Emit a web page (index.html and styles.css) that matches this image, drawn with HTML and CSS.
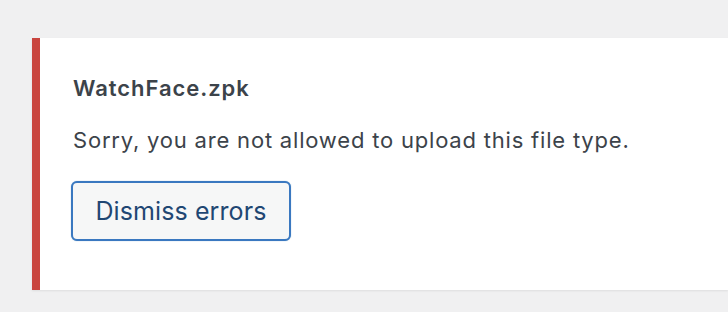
FILE: index.html
```html
<!DOCTYPE html>
<html lang="en">
<head>
<meta charset="utf-8">
<title>Upload error</title>
<link rel="stylesheet" href="styles.css">
</head>
<body>
<div class="notice">
  <p class="notice-title">WatchFace.zpk</p>
  <p class="notice-message">Sorry, you are not allowed to upload this file type.</p>
  <button class="btn" type="button">Dismiss errors</button>
</div>
</body>
</html>
```
FILE: styles.css
```css
html, body {
  margin: 0;
  padding: 0;
}
body {
  background: #f0f0f1;
  font-family: Inter, "Noto Sans", sans-serif;
  color: #3c434a;
  width: 728px;
  height: 312px;
  overflow: hidden;
}
.notice {
  margin: 38px 0 0 32px;
  width: 696px;
  height: 252px;
  box-sizing: border-box;
  background: #fff;
  border-left: 8px solid #c9453f;
  box-shadow: 0 1px 2px rgba(0, 0, 0, 0.08);
  padding: 36px 0 0 33px;
}
.notice-title {
  margin: 0;
  font-size: 22px;
  font-weight: 600;
  line-height: 28px;
  letter-spacing: 0.95px;
}
.notice-message {
  margin: 24px 0 0;
  font-size: 22px;
  font-weight: 400;
  line-height: 28px;
  letter-spacing: 0.8px;
}
.btn {
  margin: 27px 0 0 -2px;
  width: 220px;
  height: 60px;
  box-sizing: border-box;
  border: 2px solid #3a78c0;
  border-radius: 6px;
  background: #f6f7f7;
  color: #1f4773;
  font-family: inherit;
  font-size: 25px;
  font-weight: 400;
  letter-spacing: 0.1px;
  padding: 0;
  box-shadow: 0 0 1px rgba(34, 113, 177, 0.6);
}
```
